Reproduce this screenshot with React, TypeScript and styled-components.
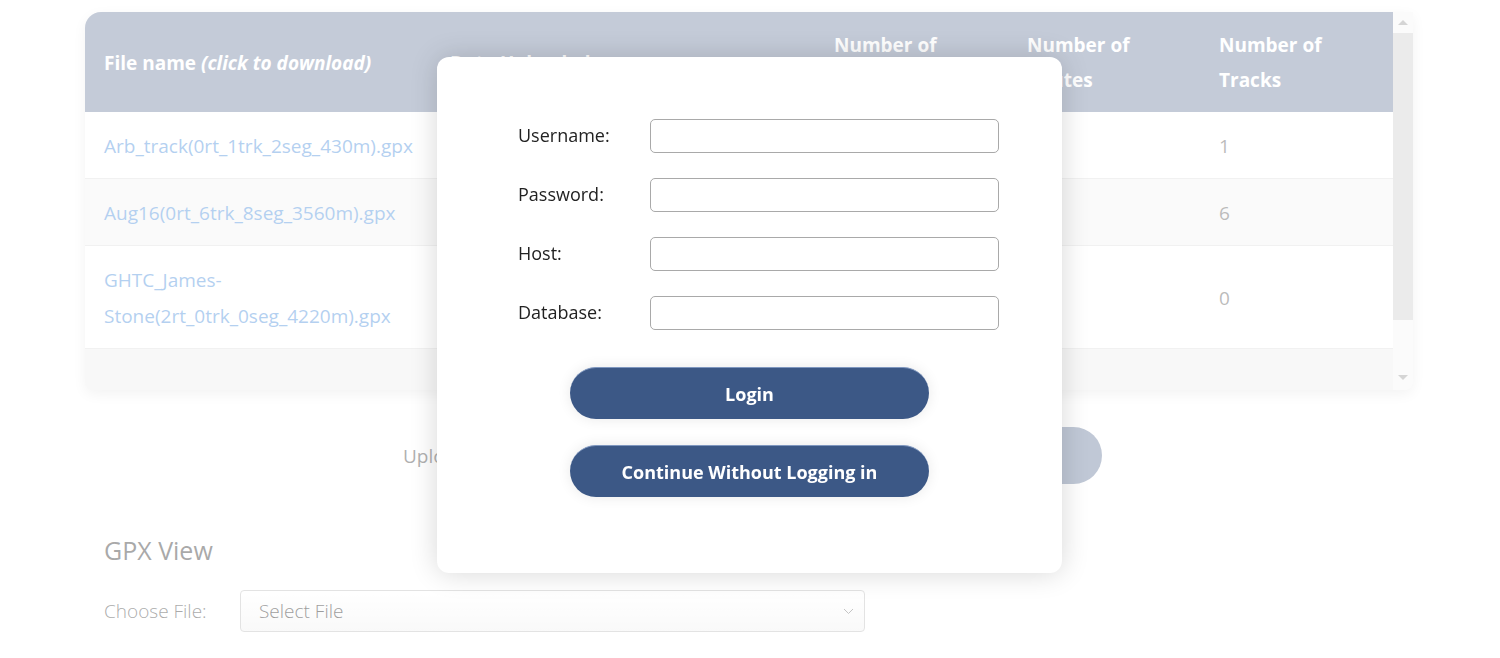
import React from "react";
import styled, { createGlobalStyle } from "styled-components";

const GlobalStyle = createGlobalStyle`
  html, body { margin: 0; padding: 0; background: #ffffff; }
  body { font-family: "Open Sans", "Noto Sans", "Liberation Sans", sans-serif; overflow: hidden; }
  * { box-sizing: border-box; }
`;

const Page = styled.div`
  width: 1500px;
  height: 658px;
  padding: 12px 87px 0 85px;
  position: relative;
`;

const TableCard = styled.div`
  display: flex;
  height: 378px;
  border-radius: 16px 0 8px 8px;
  overflow: hidden;
  background: #f1f1f1;
  box-shadow: 0 4px 14px rgba(0, 0, 0, 0.1);
`;

const TableArea = styled.div`
  flex: 1;
  overflow: hidden;
`;

const Table = styled.table`
  width: 100%;
  border-collapse: collapse;
  table-layout: fixed;
`;

const HeadCell = styled.th`
  background: #8997b1;
  color: #ffffff;
  font-weight: 700;
  font-size: 19px;
  line-height: 35px;
  text-align: left;
  vertical-align: middle;
  padding: 16px 19px 14px;
  height: 100px;
`;

const Hint = styled.em`
  font-style: italic;
`;

const Row = styled.tr<{ $striped?: boolean }>`
  background: ${(p) => (p.$striped ? "#f5f5f5" : "#ffffff")};
  border-bottom: 1px solid #e3e3e3;
`;

const Cell = styled.td`
  font-size: 19px;
  line-height: 36px;
  color: #777777;
  padding: 16px 19px 14px 19px;
  vertical-align: middle;
`;

const FileLink = styled.a`
  color: #69a1e1;
  text-decoration: none;
  cursor: pointer;
`;

const ScrollRail = styled.div`
  width: 20px;
  display: flex;
  flex-direction: column;
  align-items: center;
  background: #f7f7f7;
`;

const Arrow = styled.div<{ $down?: boolean }>`
  width: 0;
  height: 0;
  margin: ${(p) => (p.$down ? "auto 0 10px" : "8px 0 8px")};
  border-left: 5px solid transparent;
  border-right: 5px solid transparent;
  ${(p) =>
    p.$down ? "border-top: 5px solid #aaaaaa;" : "border-bottom: 5px solid #aaaaaa;"}
`;

const Thumb = styled.div`
  width: 100%;
  height: 287px;
  background: #d7d7d7;
`;

const UploadRow = styled.div`
  display: flex;
  align-items: center;
  justify-content: space-between;
  width: 699px;
  margin: 37px 0 0 318px;
  height: 57px;
`;

const UploadLabel = styled.span`
  font-size: 19px;
  color: #616161;
`;

const FileBox = styled.div`
  width: 300px;
  height: 34px;
  border: 1px solid #c7c7c7;
  border-radius: 4px;
`;

const UploadButton = styled.button`
  width: 200px;
  height: 57px;
  border: none;
  border-radius: 29px;
  background: #8191ad;
  color: #ffffff;
  font-family: inherit;
  font-size: 18px;
  font-weight: 700;
`;

const Section = styled.section`
  padding: 0 19px;
  margin-top: 50px;
`;

const SectionTitle = styled.h2`
  margin: 0;
  font-size: 25px;
  font-weight: 400;
  color: #535353;
  line-height: 32px;
`;

const ChooseRow = styled.div`
  display: flex;
  align-items: center;
  margin-top: 24px;
`;

const ChooseLabel = styled.label`
  width: 136px;
  font-size: 19px;
  font-weight: 300;
  color: #555555;
`;

const SelectBox = styled.div`
  width: 625px;
  height: 42px;
  display: flex;
  align-items: center;
  justify-content: space-between;
  padding: 0 10px 0 18px;
  border: 1px solid #c7c7c7;
  border-radius: 4px;
  background: linear-gradient(#ffffff, #f3f3f3);
  font-size: 19px;
  font-weight: 300;
  color: #3a3a3a;
`;

const Backdrop = styled.div`
  position: fixed;
  inset: 0;
  background: rgba(255, 255, 255, 0.5);
  display: flex;
  justify-content: center;
  align-items: flex-start;
  padding-top: 57px;
`;

const Modal = styled.div`
  width: 625px;
  height: 516px;
  margin-left: -1px;
  background: #ffffff;
  border-radius: 12px;
  box-shadow: 0 0 28px rgba(0, 0, 0, 0.16);
  padding: 62px 63px 0 81px;
`;

const FormGrid = styled.div`
  display: grid;
  grid-template-columns: 132px 349px;
  row-gap: 25px;
  align-items: center;
`;

const FieldLabel = styled.label`
  font-size: 18px;
  color: #222222;
  margin-top: -2px;
`;

const TextInput = styled.input`
  width: 349px;
  height: 34px;
  border: 1px solid #a9a9a9;
  border-radius: 5px;
  font-family: inherit;
  font-size: 16px;
  padding: 0 8px;
  outline: none;
`;

const ButtonStack = styled.div`
  display: flex;
  flex-direction: column;
  align-items: center;
  gap: 26px;
  margin-top: 37px;
  margin-left: -18px;
`;

const PillButton = styled.button`
  width: 359px;
  height: 52px;
  border: none;
  border-top: 1px solid #7f97bf;
  border-radius: 26px;
  background: #3c5886;
  color: #ffffff;
  font-family: inherit;
  font-size: 18px;
  font-weight: 700;
  box-shadow: 0 0 14px rgba(0, 0, 0, 0.09);
  cursor: pointer;
`;

const files = [
  { name: "Arb_track(0rt_1trk_2seg_430m).gpx", date: "2023-08-16", wp: "12", routes: "0", tracks: "1" },
  { name: "Aug16(0rt_6trk_8seg_3560m).gpx", date: "2023-08-16", wp: "0", routes: "0", tracks: "6" },
  { name: "GHTC_James-Stone(2rt_0trk_0seg_4220m).gpx", date: "2023-08-16", wp: "0", routes: "2", tracks: "0" },
];

const fields = ["Username:", "Password:", "Host:", "Database:"];

export default function App() {
  return (
    <>
      <GlobalStyle />
      <Page>
        <TableCard>
          <TableArea>
            <Table>
              <colgroup>
                <col style={{ width: 346 }} />
                <col style={{ width: 384 }} />
                <col style={{ width: 193 }} />
                <col style={{ width: 192 }} />
                <col />
              </colgroup>
              <thead>
                <tr>
                  <HeadCell>
                    File name <Hint>(click to download)</Hint>
                  </HeadCell>
                  <HeadCell>Date Uploaded</HeadCell>
                  <HeadCell>Number of Waypoints</HeadCell>
                  <HeadCell>Number of Routes</HeadCell>
                  <HeadCell>Number of Tracks</HeadCell>
                </tr>
              </thead>
              <tbody>
                {files.map((f, i) => (
                  <Row key={f.name} $striped={i % 2 === 1}>
                    <Cell>
                      <FileLink>{f.name}</FileLink>
                    </Cell>
                    <Cell>{f.date}</Cell>
                    <Cell>{f.wp}</Cell>
                    <Cell>{f.routes}</Cell>
                    <Cell>{f.tracks}</Cell>
                  </Row>
                ))}
              </tbody>
            </Table>
          </TableArea>
          <ScrollRail>
            <Arrow />
            <Thumb />
            <Arrow $down />
          </ScrollRail>
        </TableCard>

        <UploadRow>
          <UploadLabel>Upload GPX File:</UploadLabel>
          <FileBox />
          <UploadButton>Upload GPX</UploadButton>
        </UploadRow>

        <Section>
          <SectionTitle>GPX View</SectionTitle>
          <ChooseRow>
            <ChooseLabel>Choose File:</ChooseLabel>
            <SelectBox>
              <span>Select File</span>
              <svg width="11" height="7" viewBox="0 0 11 7" fill="none" stroke="#888" strokeWidth="1">
                <path d="M1 1 L5.5 5.5 L10 1" />
              </svg>
            </SelectBox>
          </ChooseRow>
        </Section>

        <Backdrop>
          <Modal>
            <FormGrid>
              {fields.map((f) => (
                <React.Fragment key={f}>
                  <FieldLabel>{f}</FieldLabel>
                  <TextInput type={f === "Password:" ? "password" : "text"} />
                </React.Fragment>
              ))}
            </FormGrid>
            <ButtonStack>
              <PillButton>Login</PillButton>
              <PillButton>Continue Without Logging in</PillButton>
            </ButtonStack>
          </Modal>
        </Backdrop>
      </Page>
    </>
  );
}
